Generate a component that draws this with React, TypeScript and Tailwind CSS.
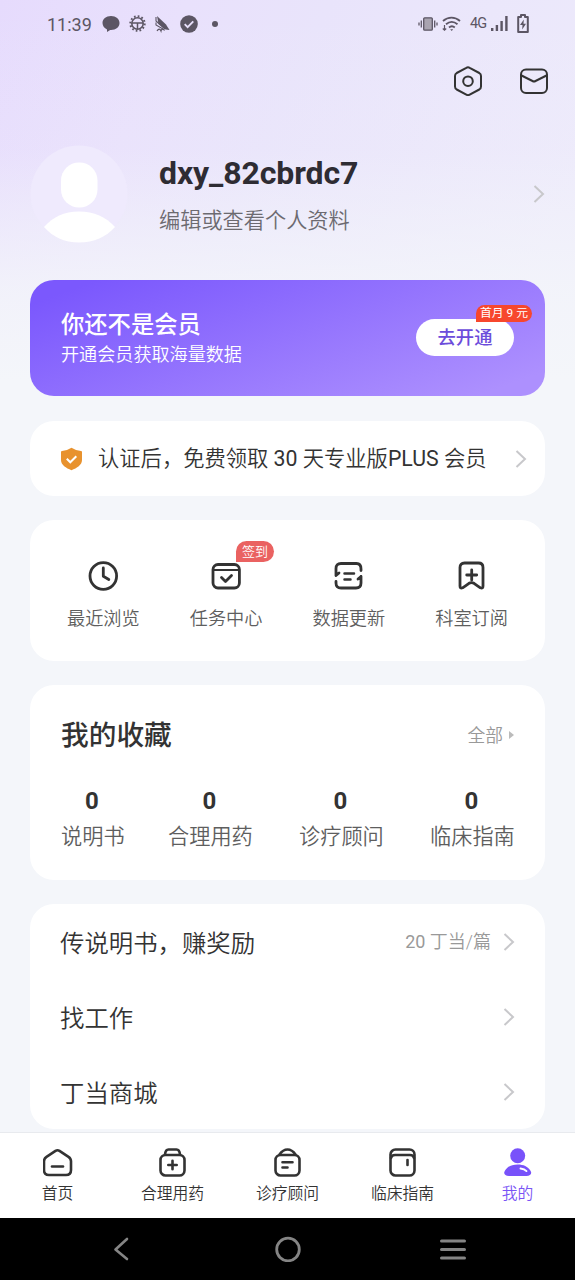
import type { ReactNode } from 'react'

const quickEntries = [
  { name: '最近浏览', icon: <ClockIcon /> },
  { name: '任务中心', icon: <TaskIcon />, badge: '签到' },
  { name: '数据更新', icon: <UpdateIcon /> },
  { name: '科室订阅', icon: <SubscribeIcon /> },
]

const favorites = [
  { name: '说明书', count: 0 },
  { name: '合理用药', count: 0 },
  { name: '诊疗顾问', count: 0 },
  { name: '临床指南', count: 0 },
]

const menuItems = [
  { name: '传说明书，赚奖励', reward: 20, unit: '丁当/篇' },
  { name: '找工作' },
  { name: '丁当商城' },
]

const tabs = [
  { name: '首页', icon: <HomeIcon /> },
  { name: '合理用药', icon: <MedicineIcon /> },
  { name: '诊疗顾问', icon: <AdvisorIcon /> },
  { name: '临床指南', icon: <GuideIcon /> },
  { name: '我的', icon: <MineIcon />, active: true },
]

const App = () => {
  return (
    <div className="flex h-[1280px] w-[575px] flex-col overflow-hidden bg-[#f4f5fa] font-[Roboto,'Noto_Sans_CJK_SC',sans-serif] text-[#333]">
      <main className="flex h-[1132px] shrink-0 flex-col overflow-hidden bg-[linear-gradient(to_bottom,rgba(244,246,250,0)_0px,rgba(244,246,250,0.1)_150px,rgba(244,246,250,0.8)_290px,#f4f6fa_380px),linear-gradient(115deg,#e6dbfd_0px,#e9e1fc_170px,#e9e4fb_300px,#edeafb_600px)]">
        <StatusBar />
        <div className="flex h-[68px] shrink-0 items-center justify-end gap-9 pr-[26.5px]">
          <SettingIcon />
          <MailIcon />
        </div>
        <Profile />
        <div className="mx-[30px] mt-[37px] flex flex-col gap-6">
          <MemberBanner />
          <div className="flex h-[75px] items-center rounded-[24px] bg-white pr-[18px] pl-[31px]">
            <ShieldIcon />
            <p className="ml-[16px] flex-1 pt-px text-[21.300px] font-[350] whitespace-nowrap">
              认证后，免费领取 <span className="font-normal">30</span> 天专业版<span className="font-normal">PLUS</span> 会员
            </p>
            <Chevron />
          </div>
          <QuickEntries />
          <Favorites />
          <Menu />
        </div>
      </main>
      <TabBar />
      <SystemNav />
    </div>
  )
}

const StatusBar = () => {
  return (
    <div className="flex h-[47px] shrink-0 items-center justify-between pr-[46px] pl-[47px] text-[#5c5664]">
      <div className="flex items-center">
        <span className="w-[45px] pt-px text-[18px] whitespace-nowrap">11:39</span>
        <svg className="ml-[10px]" width="18" height="18" viewBox="0 0 18 18" fill="currentColor">
          <path d="M9 1C4 1 .5 4 .5 8c0 3 2 5.300 4.500 6.400V17l3.200-2H9c5 0 8.500-3 8.500-7S14 1 9 1Z" />
        </svg>
        <svg className="ml-[9px]" width="17" height="17" viewBox="0 0 17 17" fill="none" stroke="currentColor">
          <circle cx="8.500" cy="8.500" r="7.200" strokeWidth="2" strokeDasharray="1.700 2.070" />
          <circle cx="8.500" cy="8.500" r="5.700" strokeWidth="1.600" />
          <path d="M3 8h11M8.500 8v6" strokeWidth="1.500" />
        </svg>
        <svg className="ml-[8px]" width="17" height="18" viewBox="0 0 17 18" fill="currentColor">
          <path d="M3 1l9 8.500 3.500 5.500-4-.5L4.500 9Z" />
          <path d="M2 2v4l9 8M2 7.500v2.500l7 4" fill="none" stroke="currentColor" strokeWidth="1.100" />
          <path d="M3 16c1.500-2.500 3-2.500 4 0 .5-2.500 2.500-2.500 3.500-.5" fill="none" stroke="currentColor" strokeWidth="1.200" />
        </svg>
        <svg className="ml-[9px]" width="18" height="18" viewBox="0 0 18 18">
          <circle cx="9" cy="9" r="8.800" fill="currentColor" />
          <path d="M4.700 9.200l2.900 2.900 5.700-5.700" fill="none" stroke="#e8e0fb" strokeWidth="1.900" />
        </svg>
        <span className="ml-[14px] size-[6px] rounded-full bg-[#5c5664]" />
      </div>
      <div className="flex items-center">
        <svg width="20" height="14" viewBox="0 0 20 14" fill="none" stroke="currentColor" strokeWidth="1.300">
          <rect x="5.700" y=".8" width="8.600" height="12.400" rx="1" fill="#a9a4b0" />
          <path d="M3.300 3.500v7M1 5.500v3M16.700 3.500v7M19 5.500v3" />
        </svg>
        <svg className="ml-[4px]" width="19" height="16" viewBox="0 0 19 16" fill="none" stroke="currentColor" strokeWidth="1.800">
          <path d="M1 5c5-4.500 12-4.500 17 0M4 8.300c3.500-3 8-3 11.500 0M7 11.500c1.800-1.600 4-1.600 5.800 0" />
          <path d="M8.200 13.300h3L9.700 15Z" fill="currentColor" stroke="none" />
          <path d="M2.500 9v5M.8 12.500l1.700 1.700 1.700-1.700" strokeWidth="1.200" />
        </svg>
        <span className="ml-[9px] w-[17px] pt-px text-[14.500px] tracking-[-1px] whitespace-nowrap">4G</span>
        <svg className="ml-[4px]" width="17" height="15" viewBox="0 0 17 15" fill="currentColor">
          <path d="M0 12h2.400v3H0zM4.700 9h2.400v6H4.700zM9.400 5h2.400v10H9.400zM14.200 0h2.400v15h-2.400z" />
        </svg>
        <svg className="ml-[9px]" width="12" height="19" viewBox="0 0 12 19">
          <path d="M4 1h4v2h2.800v15H1.200V3H4Z" fill="none" stroke="currentColor" strokeWidth="2" strokeLinejoin="round" />
          <path d="M6.800 5.500L3 11h2.500L5.200 15.500 9 9.800H6.500Z" fill="currentColor" />
        </svg>
      </div>
    </div>
  )
}

const Profile = () => {
  return (
    <div className="mt-[30px] flex h-[98px] shrink-0 items-center pr-[30px] pl-[30px]">
      <svg width="98" height="98" viewBox="0 0 98 98">
        <circle cx="49" cy="49" r="48.500" fill="#efeafd" />
        <rect x="31" y="17.500" width="36.500" height="45" rx="18" fill="#fff" />
        <path d="M14 82C23 72 34 66.500 49 66.500S76 72 85 82C76 92 64 97.500 49 97.500S23 92 14 82Z" fill="#fff" />
      </svg>
      <div className="ml-[31px] flex flex-1 flex-col pt-px">
        <h1 className="text-[32px] leading-[40px] font-bold tracking-[-0.1px] text-[#2e2c33]">dxy_82cbrdc7</h1>
        <p className="mt-[13px] text-[21.200px] leading-[30px] font-[350] text-[#6c6a70]">编辑或查看个人资料</p>
      </div>
      <Chevron />
    </div>
  )
}

const MemberBanner = () => {
  return (
    <div className="mb-px flex h-[116px] items-center justify-between rounded-[24px] bg-[linear-gradient(160deg,#7b58fd_8%,#ad90fe_92%)] pr-[31px] pl-[31px] text-white">
      <div className="pt-[2px]">
        <h2 className="text-[23.300px] leading-[32px] font-medium">你还不是会员</h2>
        <p className="text-[18.100px] leading-[28px] font-[350]">开通会员获取海量数据</p>
      </div>
      <div className="relative mb-[2px] flex h-[37px] w-[98px] items-center justify-center rounded-full bg-white pt-[2px] text-[18.300px] font-medium text-[#6c4cdb]">
        去开通
        <span className="absolute top-[-14px] left-[60px] flex h-[17px] w-[56px] items-center justify-center rounded-[9px] rounded-bl-none bg-[#f7472d] pt-px text-[11.800px] font-normal whitespace-nowrap text-white">
          首月 9 元
        </span>
      </div>
    </div>
  )
}

const QuickEntries = () => {
  return (
    <div className="grid h-[141px] grid-cols-4 rounded-[24px] bg-white px-[12px] pt-[41px]">
      {quickEntries.map((entry) => (
        <div key={entry.name} className="flex flex-col items-center">
          <div className="relative">
            {entry.icon}
            {entry.badge && (
              <span className="absolute top-[-20px] left-[25px] flex h-[21px] w-[38px] items-center justify-center rounded-[11px] rounded-bl-none bg-[#ea6261] pt-px text-[13px] font-[350] text-white">
                {entry.badge}
              </span>
            )}
          </div>
          <span className="mt-[15px] text-[18.200px] leading-[26px] font-[350] text-[#5e5e5e]">{entry.name}</span>
        </div>
      ))}
    </div>
  )
}

const Favorites = () => {
  return (
    <div className="h-[195px] rounded-[24px] bg-white px-[31px] pt-[31px]">
      <div className="flex items-center justify-between">
        <h2 className="text-[27.700px] leading-[40px] font-medium">我的收藏</h2>
        <span className="flex items-center text-[17.800px] font-[350] text-[#999]">
          全部
          <svg className="mb-[3px] ml-[6px]" width="5" height="8" viewBox="0 0 5 8" fill="#bbb">
            <path d="M0 0l5 4-5 4Z" />
          </svg>
        </span>
      </div>
      <div className="mt-[28px] grid grid-cols-[107px_131px_131px_84px] justify-items-start">
        {favorites.map((item) => (
          <div key={item.name} className="flex flex-col items-center whitespace-nowrap">
            <span className="pr-[2px] text-[24px] leading-[34px] font-bold">{item.count}</span>
            <span className="mt-px text-[21.200px] leading-[36px] font-[350] text-[#5e5e5e]">{item.name}</span>
          </div>
        ))}
      </div>
    </div>
  )
}

const Menu = () => {
  return (
    <div className="flex h-[225px] flex-col rounded-[24px] bg-white pr-[30px] pl-[30px]">
      {menuItems.map((item) => (
        <div key={item.name} className="flex h-[75px] items-center">
          <span className="flex-1 pt-[5px] text-[24.400px] font-[350]">{item.name}</span>
          {item.reward && (
            <span className="mr-[12px] text-[18px] font-[350] text-[#999]">
              <span className="font-normal">{item.reward}</span> {item.unit}
            </span>
          )}
          <Chevron />
        </div>
      ))}
    </div>
  )
}

const TabBar = () => {
  return (
    <nav className="grid h-[86px] shrink-0 grid-cols-5 border-t border-[#e8eaee] bg-white">
      {tabs.map((tab) => (
        <div
          key={tab.name}
          className={tab.active ? 'flex flex-col items-center pt-[15px] text-[#7a54f5]' : 'flex flex-col items-center pt-[15px]'}
        >
          {tab.icon}
          <span className="mt-[4px] text-[15.800px] leading-[24px] font-[350]">{tab.name}</span>
        </div>
      ))}
    </nav>
  )
}

const SystemNav = () => {
  return (
    <div className="flex h-[62px] shrink-0 items-center justify-between bg-black pr-[109px] pl-[113px] text-[#858585]">
      <svg width="16" height="24" viewBox="0 0 16 24" fill="none" stroke="currentColor" strokeWidth="2.600" strokeLinecap="round" strokeLinejoin="round">
        <path d="M14 2L2.500 12.500 14 22" />
      </svg>
      <svg className="ml-[6px]" width="26" height="26" viewBox="0 0 26 26" fill="none" stroke="currentColor" strokeWidth="2.800">
        <circle cx="13" cy="13.500" r="11.300" />
      </svg>
      <svg width="26" height="22" viewBox="0 0 26 22" fill="none" stroke="currentColor" strokeWidth="3" strokeLinecap="round">
        <path d="M1.500 3h23M1.500 11.500h23M1.500 20h23" />
      </svg>
    </div>
  )
}

function Chevron() {
  return (
    <svg className="shrink-0" width="12" height="18" viewBox="0 0 12 18" fill="none" stroke="#c8c8cb" strokeWidth="2">
      <path d="M1.500 1l8.500 8-8.500 8" />
    </svg>
  )
}

// shared frame for the 30px line icons
function LineIcon({ children, width = 2.8 }: { children: ReactNode; width?: number }) {
  return (
    <svg width="30" height="30" viewBox="0 0 30 30" fill="none" stroke="currentColor" strokeWidth={width} strokeLinecap="round" strokeLinejoin="round">
      {children}
    </svg>
  )
}

function SettingIcon() {
  return (
    <LineIcon width={2}>
      <path d="M13.300 1.800Q15 .8 16.700 1.800L26.300 7Q28 8 28 10v10.500q0 2-1.700 3L16.700 28.700q-1.700.9-3.400 0L3.700 23.500q-1.700-1-1.700-3V10Q2 8 3.700 7Z" />
      <circle cx="15" cy="15.200" r="4.800" />
    </LineIcon>
  )
}

function MailIcon() {
  return (
    <LineIcon width={2}>
      <rect x="2" y="3.500" width="26" height="23.500" rx="5" />
      <path d="M2.500 9.500L13.500 15q1.500.8 3 0L27.500 9.500" />
    </LineIcon>
  )
}

function ShieldIcon() {
  return (
    <svg width="21" height="24" viewBox="0 0 21 24">
      <path d="M10.500.8Q15 3.800 20 4q1 0 1 1v8c0 5-5 8-10.500 10.200C5 21 0 18 0 13V5q0-1 1-1 5-.2 9.500-3.200Z" fill="#e8922e" />
      <path d="M5.800 11.800l3.500 3.500 6-6" fill="none" stroke="#fff" strokeWidth="2" />
    </svg>
  )
}

function ClockIcon() {
  return (
    <LineIcon>
      <circle cx="15.300" cy="15" r="13.300" />
      <path d="M15.300 7v8.300l5.500 3.200" />
    </LineIcon>
  )
}

function TaskIcon() {
  return (
    <LineIcon>
      <rect x="2" y="3.500" width="26.400" height="23.500" rx="5" />
      <path d="M3 9h24" strokeWidth="2.200" />
      <path d="M10.500 16.500l4 4 6-6" />
    </LineIcon>
  )
}

function UpdateIcon() {
  return (
    <LineIcon>
      <path d="M2 14.500V7.500Q2 2.500 7 2.500h15.500Q27 2.500 27 8v1.500M2 14.500l3-2.500" />
      <path d="M27 15.500v6.500q0 5-5 5H7q-5 0-5-5v-1.500M27 15.500l-3 2.500" />
      <path d="M10.500 12.500h9.500M10.500 18.500h6" strokeWidth="2.500" />
    </LineIcon>
  )
}

function SubscribeIcon() {
  return (
    <LineIcon>
      <path d="M7.500 2h14q4.500 0 4.500 4.500v18.500q0 3-2.600 1.800l-2.900-2-3.500-2.500q-2.500-1.500-5 0L8.500 24.800l-2.900 2Q3 28 3 25V6.500Q3 2 7.500 2Z" />
      <path d="M14.700 9v10M9.700 14h10" />
    </LineIcon>
  )
}

function HomeIcon() {
  return (
    <LineIcon width={2.6}>
      <path d="M12.500 2.800q2-1.200 4 0l9 6q2.500 1.600 2.500 4.500v8.700q0 5-5 5h-17q-5 0-5-5v-8.700q0-2.900 2.500-4.500Z" />
      <path d="M9 18.500h11" />
    </LineIcon>
  )
}

function MedicineIcon() {
  return (
    <LineIcon width={2.6}>
      <rect x="2.500" y="7" width="24" height="20.500" rx="5" />
      <path d="M7 6.500Q7.500 1.500 10.500 1.500h8q3 0 3.500 5" />
      <path d="M14.500 12.800v8.400M10.300 17h8.400" />
    </LineIcon>
  )
}

function AdvisorIcon() {
  return (
    <LineIcon width={2.6}>
      <rect x="2.500" y="7" width="24" height="20.500" rx="5" />
      <path d="M6.500 6.500Q10 1.500 14.500 1.500t8 5" />
      <path d="M9.500 14.300h10M9.500 19.500h5" />
    </LineIcon>
  )
}

function GuideIcon() {
  return (
    <LineIcon width={2.6}>
      <rect x="2.500" y="1.500" width="24" height="26" rx="5" />
      <path d="M3 10q.5-3 4-3h15q3.500 0 4 3" />
      <path d="M19.500 12v5" />
    </LineIcon>
  )
}

function MineIcon() {
  return (
    <svg width="30" height="30" viewBox="0 0 30 30">
      <circle cx="14.700" cy="7.800" r="7.500" fill="#7852fa" />
      <path d="M6 28c-4 0-6-2.300-4.100-5.300C4.500 18.500 9 16.500 14.700 16.500s10.200 2 12.800 6.200c1.900 3-.1 5.300-4.100 5.300Z" fill="#7852fa" />
      <path d="M17.500 20.500q4 .3 6 2.600" fill="none" stroke="#fff" strokeWidth="1.900" strokeLinecap="round" />
    </svg>
  )
}

export default App
